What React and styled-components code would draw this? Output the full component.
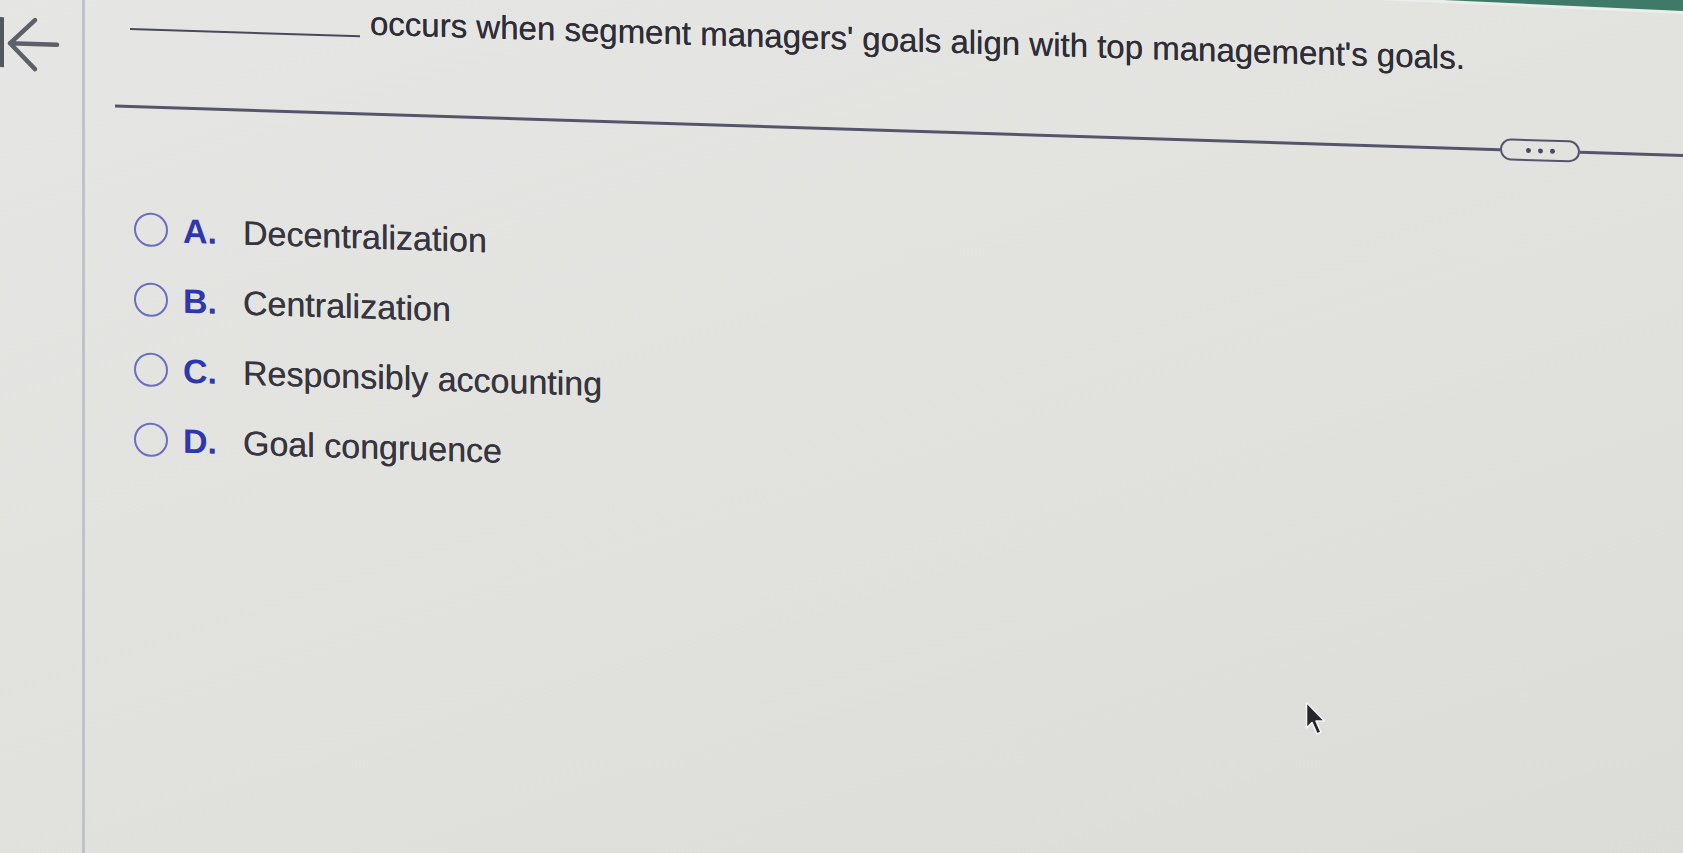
import React from 'react'
import styled, { createGlobalStyle } from 'styled-components';

const GlobalStyle = createGlobalStyle`
html, body {
  margin: 0;
  padding: 0;
  height: 100%;
  overflow: hidden;
  background: #e2e3df;
}
body {
  font-family: "Liberation Sans", Arial, sans-serif;
}
`;

const options = [
  { letter: 'A.', text: 'Decentralization' },
  { letter: 'B.', text: 'Centralization' },
  { letter: 'C.', text: 'Responsibly accounting' },
  { letter: 'D.', text: 'Goal congruence' },
];

const App = () => {
  return (
    <>
      <GlobalStyle />
      <Page>
        <TopBar />
        <Body>
          <Sidebar>
            <BackIcon width="62" height="56" viewBox="0 0 62 56">
              <rect x="0" y="2" width="4" height="50" fill="#54575e" />
              <path d="M35 4 L10 28 L35 53 M10 28 H57" fill="none" stroke="#5d6068" strokeWidth="4.5" strokeLinecap="round" strokeLinejoin="round" />
            </BackIcon>
          </Sidebar>
          <Main>
            <Question>
              <Blank />occurs when segment managers' goals align with top management's goals.
            </Question>
            <Divider>
              <Rule />
              <MoreButton>
                <Dot /><Dot /><Dot />
              </MoreButton>
              <Rule $width="103px" />
            </Divider>
            <OptionList>
              {options.map((o) => (
                <Option key={o.letter}>
                  <Radio />
                  <Letter>{o.letter}</Letter>
                  <Label>{o.text}</Label>
                </Option>
              ))}
            </OptionList>
          </Main>
        </Body>
      </Page>
      <Cursor width="24" height="36" viewBox="0 0 24 36">
        <path d="M1.5 1.5 L1.5 27 L7 21.5 L12 33 L16 31.2 L11 20 L19.5 20 Z" fill="#26272c" stroke="#f4f4f4" strokeWidth="1.6" strokeLinejoin="round" />
      </Cursor>
    </>
  )
}

export default App;

const Page = styled.div`
width: 100%;
transform-origin: 0 0;
transform: skewY(1.8deg) translateY(-82px);
background: linear-gradient(160deg, #e6e7e4 0%, #e1e2de 55%, #dadbd7 100%);
`;

const TopBar = styled.div`
height: 40px;
background: #3f7a68;
transform-origin: right bottom;
transform: skewY(0.8deg);
box-shadow: 0 3px 0 #eaedea;
`;

const Body = styled.div`
display: flex;
min-height: 980px;
`;

const Sidebar = styled.div`
width: 82px;
flex-shrink: 0;
border-right: 3px solid #bcc3cb;
padding-top: 57px;
`;

const BackIcon = styled.svg`
display: block;
`;

const Main = styled.div`
flex: 1;
display: flex;
flex-direction: column;
`;

const Question = styled.div`
margin-top: 35px;
padding-left: 45px;
font-size: 33px;
line-height: 38px;
color: #2f2d37;
text-shadow: 0 0 0.6px #2f2d37;
white-space: nowrap;
`;

const Blank = styled.span`
display: inline-block;
width: 230px;
height: 0;
border-bottom: 2.5px solid #4a485e;
margin-right: 10px;
margin-bottom: -3px;
`;

const Divider = styled.div`
display: flex;
align-items: center;
height: 22px;
margin-top: 60px;
margin-left: 30px;
`;

const Rule = styled.div`
height: 3px;
background: #55546b;
flex: ${(p) => (p.$width ? `0 0 ${p.$width}` : '1')};
`;

const MoreButton = styled.div`
width: 80px;
height: 22px;
box-sizing: border-box;
border: 2.5px solid #55546b;
border-radius: 11px;
display: flex;
align-items: center;
justify-content: center;
gap: 7px;
`;

const Dot = styled.span`
width: 5px;
height: 5px;
border-radius: 50%;
background: #4a4960;
`;

const OptionList = styled.div`
display: flex;
flex-direction: column;
margin-top: 77px;
padding-left: 49px;
`;

const Option = styled.div`
display: flex;
align-items: center;
height: 70px;
`;

const Radio = styled.span`
width: 34px;
height: 34px;
box-sizing: border-box;
border: 2.5px solid #6a6fc2;
border-radius: 50%;
flex-shrink: 0;
`;

const Letter = styled.span`
width: 60px;
margin-left: 15px;
font-size: 34px;
font-weight: bold;
color: #2f37ad;
`;

const Label = styled.span`
font-size: 34px;
color: #37353f;
text-shadow: 0 0 0.6px #37353f;
white-space: nowrap;
`;

const Cursor = styled.svg`
position: fixed;
left: 1305px;
top: 701px;
`;
